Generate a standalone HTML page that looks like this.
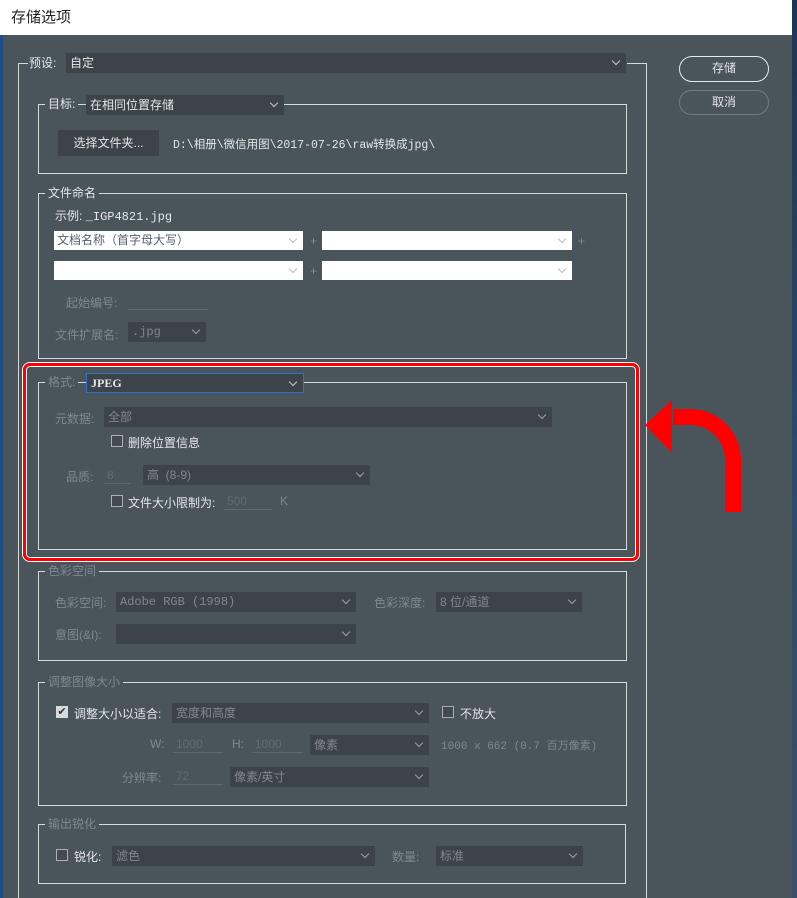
<!DOCTYPE html>
<html><head><meta charset="utf-8"><style>
*{margin:0;padding:0;box-sizing:border-box}
body{width:797px;height:898px;overflow:hidden;background:#4a545b;position:relative;font-family:"Liberation Sans","Noto Sans CJK SC",sans-serif;font-size:12px;color:#e4e6e8}
.a{position:absolute;white-space:nowrap}
.title{left:0;top:0;width:792px;height:35px;background:#fff;color:#222;font-size:15px;line-height:35px;padding-left:11px}
.ln{position:absolute;background:#d6d9db}
.box{position:absolute;border:1px solid #d6d9db}
.lbl{position:absolute;background:#4a545b;padding:0 3px;line-height:14px;white-space:nowrap}
.sel{position:absolute;background:#3c444a;height:20px;line-height:20px;padding-left:4px;color:#e4e6e8}
.sel:after{content:"";position:absolute;right:7px;top:5px;width:5px;height:5px;border-right:1.5px solid #c8ccd0;border-bottom:1.5px solid #c8ccd0;transform:rotate(45deg)}
.dim{color:#7f888e}
.sel.dim:after{border-color:#9aa2a8}
.wh{position:absolute;background:#fff;height:19px;line-height:19px;padding-left:3px;color:#56606a}
.wh:after{content:"";position:absolute;right:7px;top:5px;width:5px;height:5px;border-right:1px solid #bbb;border-bottom:1px solid #bbb;transform:rotate(45deg)}
.cb{position:absolute;width:12px;height:12px;border:1px solid #aab0b4;background:#434b51}
.und{position:absolute;border-bottom:1px solid #5f686f;height:18px;color:#626b72;line-height:18px;padding-left:3px}
.mono{font-family:"Liberation Mono","Noto Sans CJK SC",monospace}
</style></head><body>
<div class="a" style="left:0;top:0;width:3px;height:898px;background:#1d4e84"></div>
<div class="a" style="left:792px;top:0;width:5px;height:898px;background:linear-gradient(#1e3550,#2a4a66 50%,#3b5068)"></div>
<div class="a title">存储选项</div>

<div class="ln" style="left:18px;top:63px;width:1px;height:835px"></div>
<div class="ln" style="left:18px;top:63px;width:10px;height:1px"></div>
<div class="ln" style="left:627px;top:63px;width:20px;height:1px"></div>
<div class="ln" style="left:646px;top:63px;width:1px;height:835px"></div>
<div class="a" style="left:29px;top:56px;line-height:14px">预设:</div>
<div class="sel" style="left:66px;top:53px;width:560px">自定</div>

<div class="a" style="left:679px;top:56px;width:90px;height:26px;border:1.5px solid #e8e8e8;border-radius:13px;text-align:center;line-height:23px">存储</div>
<div class="a" style="left:679px;top:90px;width:90px;height:25px;border:1.5px solid #737b82;border-radius:13px;text-align:center;line-height:22px">取消</div>

<div class="box" style="left:38px;top:104px;width:589px;height:70px"></div>
<div class="lbl" style="left:45px;top:97px">目标:</div>
<div class="sel" style="left:86px;top:95px;width:198px">在相同位置存储</div>
<div class="a" style="left:58px;top:130px;width:101px;height:26px;background:#3c444a;text-align:center;line-height:26px">选择文件夹...</div>
<div class="a mono" style="left:173px;top:136px;font-size:11.5px">D:\相册\微信用图\2017-07-26\raw转换成jpg\</div>

<div class="box" style="left:38px;top:193px;width:589px;height:166px"></div>
<div class="lbl" style="left:45px;top:186px">文件命名</div>
<div class="a" style="left:55px;top:207px">示例: <span class="mono">_IGP4821.jpg</span></div>
<div class="wh" style="left:54px;top:231px;width:249px">文档名称（首字母大写）</div>
<div class="wh" style="left:322px;top:231px;width:250px"></div>
<div class="wh" style="left:54px;top:261px;width:249px"></div>
<div class="wh" style="left:322px;top:261px;width:250px"></div>
<div class="a dim" style="left:310px;top:234px">+</div><div class="a dim" style="left:578px;top:234px">+</div>
<div class="a dim" style="left:310px;top:264px">+</div>
<div class="a dim" style="left:66px;top:294px">起始编号:</div>
<div class="und" style="left:128px;top:292px;width:80px"></div>
<div class="a dim" style="left:55px;top:326px">文件扩展名:</div>
<div class="sel dim mono" style="left:128px;top:322px;width:78px">.jpg</div>

<div class="a" style="left:23px;top:363px;width:616px;height:198px;border:3px solid #f00;border-radius:7px;box-shadow:inset 0 0 0 1px #fff,0 0 0 1px #fff"></div>
<div class="box" style="left:38px;top:382px;width:589px;height:168px"></div>
<div class="lbl dim" style="left:45px;top:375px">格式:</div>
<div class="sel mono" style="left:86px;top:373px;width:218px;border:1px solid #2e73c8;line-height:18px;font-weight:bold;font-family:'Liberation Serif',serif">JPEG</div>
<div class="a dim" style="left:55px;top:410px">元数据:</div>
<div class="sel dim" style="left:104px;top:407px;width:448px">全部</div>
<div class="cb" style="left:111px;top:435px"></div>
<div class="a" style="left:128px;top:434px">删除位置信息</div>
<div class="a dim" style="left:66px;top:468px">品质:</div>
<div class="und" style="left:104px;top:466px;width:26px">8</div>
<div class="sel dim" style="left:143px;top:465px;width:227px">高 &nbsp;(8-9)</div>
<div class="cb" style="left:111px;top:495px"></div>
<div class="a" style="left:128px;top:494px">文件大小限制为:</div>
<div class="und" style="left:224px;top:492px;width:48px">500</div>
<div class="a dim" style="left:280px;top:494px">K</div>

<svg class="a" style="left:640px;top:395px" width="110" height="125" viewBox="0 0 110 125">
<path d="M33 22 H50 A43 43 0 0 1 93 65 V117" fill="none" stroke="#f00" stroke-width="16"/>
<path d="M5 30 L32 5 L32 58 Z" fill="#f00"/>
</svg>

<div class="box" style="left:38px;top:571px;width:589px;height:90px"></div>
<div class="lbl dim" style="left:45px;top:564px">色彩空间</div>
<div class="a dim" style="left:55px;top:594px">色彩空间:</div>
<div class="sel dim mono" style="left:116px;top:592px;width:240px">Adobe RGB (1998)</div>
<div class="a dim" style="left:374px;top:594px">色彩深度:</div>
<div class="sel dim" style="left:436px;top:592px;width:146px">8 位/通道</div>
<div class="a dim" style="left:55px;top:626px">意图(&amp;I):</div>
<div class="sel dim" style="left:116px;top:624px;width:240px"></div>

<div class="box" style="left:38px;top:682px;width:589px;height:124px"></div>
<div class="lbl dim" style="left:45px;top:675px">调整图像大小</div>
<div class="a" style="left:56px;top:706px;width:12px;height:12px;background:#d8dbdd;color:#333;font-size:11px;line-height:12px;text-align:center">✔</div>
<div class="a" style="left:74px;top:705px">调整大小以适合:</div>
<div class="sel dim" style="left:172px;top:703px;width:257px">宽度和高度</div>
<div class="cb" style="left:442px;top:706px"></div>
<div class="a" style="left:460px;top:705px">不放大</div>
<div class="a dim" style="left:150px;top:737px">W:</div>
<div class="und" style="left:173px;top:735px;width:50px">1000</div>
<div class="a dim" style="left:232px;top:737px">H:</div>
<div class="und" style="left:252px;top:735px;width:51px">1000</div>
<div class="sel dim" style="left:310px;top:735px;width:119px">像素</div>
<div class="a dim mono" style="left:441px;top:737px;font-size:11px">1000 x 662 (0.7 百万像素)</div>
<div class="a dim" style="left:122px;top:769px">分辨率:</div>
<div class="und" style="left:173px;top:767px;width:50px">72</div>
<div class="sel dim" style="left:230px;top:767px;width:199px">像素/英寸</div>

<div class="box" style="left:38px;top:824px;width:588px;height:60px"></div>
<div class="lbl dim" style="left:45px;top:817px">输出锐化</div>
<div class="cb" style="left:56px;top:849px"></div>
<div class="a" style="left:74px;top:848px">锐化:</div>
<div class="sel dim" style="left:112px;top:846px;width:263px">滤色</div>
<div class="a dim" style="left:392px;top:848px">数量:</div>
<div class="sel dim" style="left:436px;top:846px;width:147px">标准</div>
</body></html>
